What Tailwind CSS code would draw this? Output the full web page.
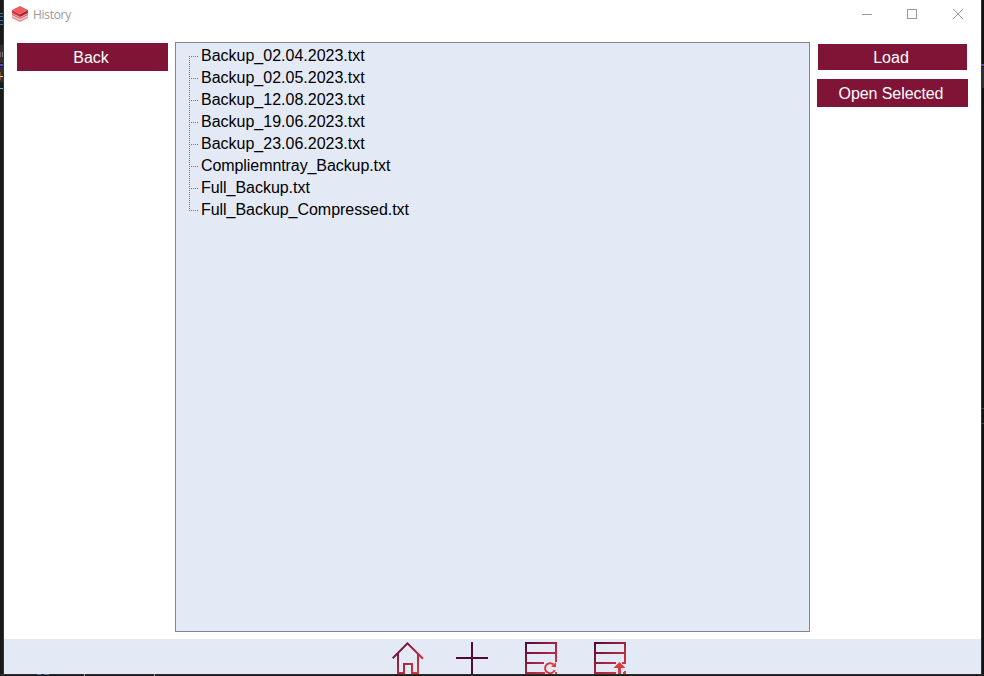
<!DOCTYPE html>
<html lang="en">
<head>
<meta charset="utf-8">
<title>History</title>
<script src="https://cdn.jsdelivr.net/npm/@tailwindcss/browser@4"></script>
</head>
<body class="relative w-[984px] h-[676px] overflow-hidden bg-[#1b1a1b] font-['Liberation_Sans',Arial,sans-serif]">
<!-- Desktop visible around the window -->
<svg class="absolute inset-0" width="984" height="676" fill="none" shape-rendering="crispEdges">
  <path d="M0 13h3M0 16h3M0 20h3M0 24h3" stroke="#2878b8"/>
  <path d="M0 45h4v18H0zM0 67h4v15H0z" fill="#303030"/>
  <path d="M0 52h1v5H0z" fill="#a65030"/><path d="M2 52h1v5H2z" fill="#4588a8"/>
  <path d="M0 64h4v2H0z" fill="#6248bd"/><path d="M0 72h1v8H0z" fill="#8d4a28"/>
  <path d="M0 76.500h4" stroke="#ccc"/><path d="M0 88.500h4" stroke="#61b6d0"/>
  <path d="M981 0h3v676h-3z" fill="#111"/><path d="M981.500 0v676M3.500 0v676" stroke="#343436"/>
  <path d="M981 64h3v2h-3z" fill="#6248bd"/><path d="M981 67h3v21h-3z" fill="#303030"/>
  <path d="M981 408.500h3M981 423.500h3" stroke="#454545"/>
  <path d="M0 674.500h984" stroke="#2c2c2e"/>
  <path d="M37 674.500h4M44 674.500h5" stroke="#58728a"/><path d="M84.500 674v2M154.500 674v2" stroke="#9a9a9a"/>
</svg>
<main class="relative ml-1 w-[977px] h-[674px] bg-white flex flex-col">
  <header class="h-[42px] flex items-start justify-between shrink-0">
    <div class="flex items-start pl-2 pt-[6px]">
      <svg width="17" height="17" viewBox="0 0 17 17">
        <path d="M0 10l8 4 8-4v2l-8 4-8-4z" fill="#e08a8e"/>
        <path d="M0 9l8 4 8-4v1.500l-8 4-8-4z" fill="#f8c9ca"/>
        <path d="M0 7.500l8 4 8-4v1.500l-8 4-8-4z" fill="#c8505a"/>
        <path d="M0 6.500l8 4 8-4V8l-8 4-8-4z" fill="#f3aeb0"/>
        <path d="M0 4l8 4v3L0 7z" fill="#cf333c"/><path d="M16 4L8 8v3l8-4z" fill="#a82832"/>
        <path d="M8 0l8 4-8 4-8-4z" fill="#ee5b61"/>
      </svg>
      <h1 class="ml-1 mt-[1px] text-[12px] leading-4 text-[#999] font-['Open_Sans','Noto_Sans',sans-serif] tracking-[-0.3px]">History</h1>
    </div>
    <svg class="mr-[17px] mt-2" width="102" height="13" fill="none" stroke="#999">
      <path d="M0 6.500h10M45.500 1.500h9v9h-9z" shape-rendering="crispEdges"/>
      <path d="M91 1l10 10M101 1l-10 10"/>
    </svg>
  </header>
  <section class="h-[597px] flex items-start shrink-0 text-[16px]">
    <button class="ml-[13px] mt-[1px] w-[151px] h-7 bg-[#801436] text-white leading-[26px] pt-[2px] pr-[3px]">Back</button>
    <div class="ml-[7px] w-[635px] h-[590px] bg-[#e3e9f5] border border-[#828790] flex">
      <svg class="ml-[13px] w-[10px] h-[180px] shrink-0" viewBox="0 0 10 180" fill="none" stroke="#737780" stroke-dasharray="1 1" shape-rendering="crispEdges">
        <path d="M.5 13v155"/>
        <path d="M0 13.500h9M0 35.500h9M0 57.500h9M0 79.500h9M0 101.500h9M0 123.500h9M0 145.500h9M0 167.500h9"/>
      </svg>
      <ul class="ml-[2px] pt-[2px] leading-[22px] text-black whitespace-nowrap">
        <li>Backup_02.04.2023.txt</li>
        <li>Backup_02.05.2023.txt</li>
        <li>Backup_12.08.2023.txt</li>
        <li>Backup_19.06.2023.txt</li>
        <li>Backup_23.06.2023.txt</li>
        <li class="tracking-[-0.08px]">Compliemntray_Backup.txt</li>
        <li class="tracking-[-0.04px]">Full_Backup.txt</li>
        <li class="tracking-[-0.04px]">Full_Backup_Compressed.txt</li>
      </ul>
    </div>
    <div class="ml-[7px] mt-[2px] w-[151px] flex flex-col items-center gap-[9px] text-white">
      <button class="w-[149px] h-[26px] bg-[#801436] leading-6 pt-[2px] pr-[3px]">Load</button>
      <button class="w-[151px] h-7 bg-[#801436] leading-[26px] pt-[2px] pr-[3px] tracking-[-0.08px]">Open Selected</button>
    </div>
  </section>
  <footer class="h-[35px] bg-[#e3e9f5] flex items-start pl-[388px] pt-[2px]">
    <svg width="32" height="33" viewBox="0 0 32 33" fill="none" stroke="url(#ramp)" stroke-width="2">
      <defs><linearGradient id="ramp" gradientUnits="userSpaceOnUse" x1="0" y1="0" x2="32" y2="32"><stop stop-color="#420b35"/><stop offset=".52" stop-color="#a52440"/><stop offset="1" stop-color="#df4141"/></linearGradient></defs>
      <path d="M.7 17.300L15.500 2.300l15.500 15.500M26 13v19h-6v-9h-8v9H6V12"/>
    </svg>
    <svg class="ml-8" width="32" height="33" fill="none" stroke="#500b32" stroke-width="2"><path d="M16 1v32M0 17h32"/></svg>
    <svg class="ml-[37px]" width="33" height="33" viewBox="0 0 33 33" fill="none" stroke="url(#ramp)" stroke-width="2">
      <path d="M20 32H1V2h30v19M1 12h30M1 22h18M31 31v2"/>
      <path d="M28.500 23.600a5 5 0 1 0 1.300 5.400" stroke="#d63d42"/><path d="M31 21v5h-5z" fill="#d63d42" stroke="none"/>
    </svg>
    <svg class="ml-9" width="33" height="33" viewBox="0 0 33 33" fill="none" stroke="url(#ramp)" stroke-width="2">
      <path d="M22 32H1V2h30v20h-3M1 12h30M1 22h21M29 32h3M31 30v3"/>
      <path d="M25.500 21l6 6H27v6h-3v-6h-4.500z" fill="#d63d42" stroke="none"/>
    </svg>
  </footer>
</main>
</body>
</html>
